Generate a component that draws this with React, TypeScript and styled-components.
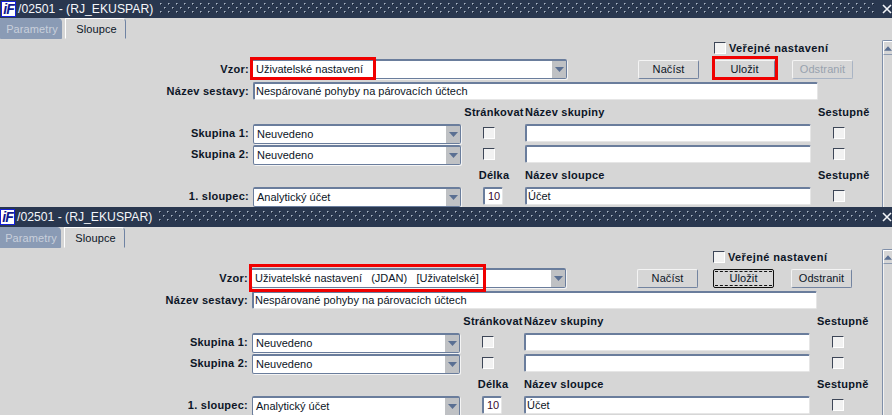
import React from "react";
import styled, { createGlobalStyle } from "styled-components";

const Global = createGlobalStyle`
  html, body { margin: 0; padding: 0; background: #d6d6d6; overflow: hidden; }
  body { font-family: "Liberation Sans", Arial, sans-serif; font-size: 11px; color: #0c1526; }
`;

const Page = styled.div`
  width: 892px;
  height: 415px;
  overflow: hidden;
`;

const Panel = styled.section<{ $height: number; $shift: number }>`
  display: flex;
  flex-direction: column;
  height: ${(p) => p.$height}px;
  width: ${(p) => 892 + p.$shift}px;
  margin-left: ${(p) => -p.$shift}px;
  overflow: hidden;
  background: #d6d6d6;
`;

const TitleBar = styled.header<{ $height: number }>`
  flex: none;
  display: flex;
  align-items: center;
  height: ${(p) => p.$height}px;
  background: #29374f;
  color: #f4f6fa;
  font-size: 12.2px;
`;

const Logo = styled.div`
  flex: none;
  width: 13px;
  height: 14px;
  margin-left: 1px;
  border: 1px solid #1420d8;
  background: #fff;
  color: #10188f;
  font: italic bold 14px/14px "Liberation Sans", sans-serif;
  text-align: center;
  letter-spacing: -1px;
`;

const TitleText = styled.div`
  flex: none;
  width: 142px;
  margin-left: 2px;
  white-space: nowrap;
`;

const Dots = styled.svg`
  flex: 1;
  height: 12px;
  min-width: 0;
`;

const Close = styled.svg`
  flex: none;
  width: 10px;
  height: 10px;
  margin: 0 0 0 6px;
`;

const TabStrip = styled.nav`
  flex: none;
  display: flex;
  height: 21px;
`;

const Tab = styled.div<{ $active?: boolean }>`
  box-sizing: border-box;
  width: ${(p) => (p.$active ? 61 : 62)}px;
  margin-left: ${(p) => (p.$active ? 3 : 0)}px;
  height: 21px;
  padding-left: 2px;
  line-height: 20px;
  text-align: center;
  font-size: 11px;
  letter-spacing: 0.1px;
  border-radius: 0 4px 0 0;
  color: ${(p) => (p.$active ? "#0c1526" : "#c9d0dc")};
  background: ${(p) => (p.$active ? "#d6d6d6" : "#8a9bb5")};
  border-top: 1px solid ${(p) => (p.$active ? "#ffffff" : "#8a9bb5")};
  border-left: 1px solid ${(p) => (p.$active ? "#ffffff" : "#8a9bb5")};
  border-right: 1px solid ${(p) => (p.$active ? "#6f83a3" : "#8a9bb5")};
  border-bottom: 1px solid ${(p) => (p.$active ? "#d6d6d6" : "#8a9bb5")};
`;

const Body = styled.div`
  flex: 1;
  min-height: 0;
  display: flex;
`;

const Form = styled.div`
  position: relative;
  flex: 1;
  min-width: 0;
  padding-top: 3px;
`;

const PublicRow = styled.div`
  display: flex;
  align-items: center;
  height: 11px;
  padding-left: 714px;
`;

const CheckText = styled.span`
  margin-left: 3px;
  font-weight: bold;
  font-size: 11px;
  letter-spacing: 0.38px;
  white-space: nowrap;
`;

const Check = styled.div`
  box-sizing: border-box;
  width: 12px;
  height: 12px;
  background: #f2f2f2;
  border-top: 1px solid #3d4657;
  border-left: 1px solid #3d4657;
  border-right: 1px solid #ffffff;
  border-bottom: 1px solid #ffffff;
`;

const TemplateRow = styled.div`
  display: flex;
  align-items: center;
  margin-top: 6px;
  height: 20px;
`;

const NameRow = styled.div`
  display: flex;
  align-items: center;
  margin-top: 3px;
  height: 18px;
`;

const Label = styled.div`
  flex: none;
  box-sizing: border-box;
  width: 249px;
  text-align: right;
  font-weight: bold;
  font-size: 11px;
  letter-spacing: 0.25px;
  white-space: nowrap;
`;

const Select = styled.div<{ $width: number; $gap?: number }>`
  flex: none;
  box-sizing: border-box;
  display: flex;
  width: ${(p) => p.$width}px;
  height: 20px;
  margin-left: ${(p) => p.$gap ?? 4}px;
  background: #fff;
  border: 1px solid #6a7d9c;
  border-top-width: 2px;
  border-radius: 2px;
  box-shadow: 1px 1px 0 #f4f4f4;
`;

const SelectText = styled.div`
  flex: 1;
  min-width: 0;
  padding-left: 3px;
  line-height: 17px;
  font-size: 11px;
  white-space: pre;
`;

const SelectArrow = styled.div`
  flex: none;
  display: flex;
  align-items: center;
  justify-content: center;
  width: 14px;
  background: #bfc1c4;
`;

const Arrow = styled.svg`
  width: 9px;
  height: 5px;
`;

const Buttons = styled.div`
  display: flex;
  margin-left: 71px;
`;

const Button = styled.div<{ $gap?: number; $disabled?: boolean; $focus?: boolean }>`
  box-sizing: border-box;
  width: 61px;
  height: 19px;
  margin-left: ${(p) => p.$gap ?? 0}px;
  line-height: 17px;
  text-align: center;
  font-size: 11px;
  letter-spacing: 0.1px;
  border-radius: 2px;
  color: ${(p) => (p.$disabled ? "#98a2ae" : "#0c1526")};
  border: 1px solid;
  border-color: ${(p) =>
    p.$focus
      ? "#101010"
      : p.$disabled
      ? "#f4f4f4 #a9b4c4 #a9b4c4 #f4f4f4"
      : "#f4f4f4 #7384a0 #7384a0 #f4f4f4"};
`;

const FocusRing = styled.div`
  box-sizing: border-box;
  margin: 1px;
  height: 15px;
  line-height: 13px;
  border: 1px dashed #101010;
  border-left: 0;
  border-right: 0;
`;

const TextBox = styled.div<{ $width: number; $height?: number; $gap?: number; $center?: boolean }>`
  flex: none;
  box-sizing: border-box;
  width: ${(p) => p.$width}px;
  height: ${(p) => p.$height ?? 18}px;
  margin-left: ${(p) => p.$gap ?? 0}px;
  padding-left: 1px;
  line-height: 15px;
  font-size: 11px;
  white-space: nowrap;
  text-align: ${(p) => (p.$center ? "center" : "left")};
  background: #fff;
  border-top: 2px solid #6a7d9c;
  border-left: 2px solid #6a7d9c;
  border-right: 1px solid #e6e6e6;
  border-bottom: 1px solid #e6e6e6;
  border-radius: 2px;
  color: ${(p) => (p.$center ? "#3a0a30" : "#0c1526")};
`;

const Grid = styled.div`
  display: grid;
  margin-top: 6px;
  grid-template-columns: 249px 212px 64px 286px 56px;
  grid-template-rows: 18px 21px 24px 18px 20px;
  align-items: start;
`;

const GridLabel = styled(Label)`
  line-height: 19px;
`;

const Head = styled.div<{ $center?: boolean; $inset?: number }>`
  line-height: 13px;
  font-weight: bold;
  font-size: 11px;
  letter-spacing: 0.25px;
  white-space: nowrap;
  text-align: ${(p) => (p.$center ? "center" : "left")};
  padding-left: ${(p) => p.$inset ?? 0}px;
`;

const CheckCell = styled.div<{ $inset: number }>`
  display: flex;
  padding: 3px 0 0 ${(p) => p.$inset}px;
`;

const CenterCell = styled.div`
  display: flex;
  justify-content: center;
`;

const Mark = styled.div<{ $x: number; $y: number; $w: number; $h: number }>`
  position: absolute;
  box-sizing: border-box;
  left: ${(p) => p.$x}px;
  top: ${(p) => p.$y}px;
  width: ${(p) => p.$w}px;
  height: ${(p) => p.$h}px;
  border: 3px solid #f00000;
  pointer-events: none;
`;

const Scrollbar = styled.aside`
  flex: none;
  box-sizing: border-box;
  width: 10px;
  margin-top: 1px;
  border-left: 1px solid #7f8fa9;
  border-top: 1px solid #7f8fa9;
  border-radius: 2px 0 0 0;
  background: #d6d6d6;
`;

const ScrollUp = styled.div`
  display: flex;
  align-items: center;
  justify-content: center;
  box-sizing: border-box;
  height: 14px;
  border-top: 1px solid #fff;
  border-left: 1px solid #fff;
  border-bottom: 1px solid #8c9ab0;
`;

const ScrollTrack = styled.div`
  height: 100%;
  border-left: 1px solid #f2f2f2;
`;

const DownArrow = () => (
  <Arrow viewBox="0 0 9 5">
    <path d="M0 0H9L4.5 5Z" fill="#5a6f92" />
  </Arrow>
);

const Sel = ({ text, width, gap }: { text: string; width: number; gap?: number }) => (
  <Select $width={width} $gap={gap}>
    <SelectText>{text}</SelectText>
    <SelectArrow>
      <DownArrow />
    </SelectArrow>
  </Select>
);

type WinProps = {
  id: string;
  height: number;
  barHeight: number;
  shift: number;
  template: string;
  disabled?: boolean;
  focus?: boolean;
  marks: { x: number; y: number; w: number; h: number }[];
};

const Window = ({ id, height, barHeight, shift, template, disabled, focus, marks }: WinProps) => (
  <Panel $height={height} $shift={shift}>
    <TitleBar $height={barHeight}>
      <Logo>iF</Logo>
      <TitleText>/02501 - (RJ_EKUSPAR)</TitleText>
      <Dots aria-hidden="true">
        <defs>
          <pattern id={id} width="8" height="8" patternUnits="userSpaceOnUse">
            <rect x="0" y="0" width="1" height="1" fill="#aeb8c6" />
            <rect x="1" y="0" width="1" height="1" fill="#6f7d92" />
            <rect x="0" y="1" width="1" height="1" fill="#6f7d92" />
            <rect x="1" y="1" width="1" height="1" fill="#141c2b" />
            <rect x="4" y="4" width="1" height="1" fill="#aeb8c6" />
            <rect x="5" y="4" width="1" height="1" fill="#6f7d92" />
            <rect x="4" y="5" width="1" height="1" fill="#6f7d92" />
            <rect x="5" y="5" width="1" height="1" fill="#141c2b" />
          </pattern>
        </defs>
        <rect width="100%" height="100%" fill={`url(#${id})`} />
      </Dots>
      <Close viewBox="0 0 10 10" aria-hidden="true">
        <path d="M1 1L9 9M9 1L1 9" stroke="#f2f4f8" strokeWidth="1.6" />
      </Close>
    </TitleBar>
    <TabStrip>
      <Tab>Parametry</Tab>
      <Tab $active>Sloupce</Tab>
    </TabStrip>
    <Body>
      <Form>
        <PublicRow>
          <Check />
          <CheckText>Veřejné nastavení</CheckText>
        </PublicRow>
        <TemplateRow>
          <Label>Vzor:</Label>
          <Sel text={template} width={315} gap={3} />
          <Buttons>
            <Button>Načíst</Button>
            <Button $gap={15} $focus={focus}>
              {focus ? <FocusRing>Uložit</FocusRing> : "Uložit"}
            </Button>
            <Button $gap={17} $disabled={disabled}>Odstranit</Button>
          </Buttons>
        </TemplateRow>
        <NameRow>
          <Label>Název sestavy:</Label>
          <TextBox $width={565} $gap={4}>Nespárované pohyby na párovacích účtech</TextBox>
        </NameRow>
        <Grid>
          <span />
          <span />
          <Head $center $inset={2}>Stránkovat</Head>
          <Head>Název skupiny</Head>
          <Head $inset={7}>Sestupně</Head>

          <GridLabel>Skupina 1:</GridLabel>
          <Sel text="Neuvedeno" width={208} />
          <CheckCell $inset={22}><Check /></CheckCell>
          <TextBox $width={286}> </TextBox>
          <CheckCell $inset={22}><Check /></CheckCell>

          <GridLabel>Skupina 2:</GridLabel>
          <Sel text="Neuvedeno" width={208} />
          <CheckCell $inset={22}><Check /></CheckCell>
          <TextBox $width={286}> </TextBox>
          <CheckCell $inset={22}><Check /></CheckCell>

          <span />
          <span />
          <Head $center $inset={2}>Délka</Head>
          <Head>Název sloupce</Head>
          <Head $inset={7}>Sestupně</Head>

          <GridLabel>1. sloupec:</GridLabel>
          <Sel text="Analytický účet" width={208} />
          <CenterCell><TextBox $width={20} $center>10</TextBox></CenterCell>
          <TextBox $width={286}>Účet</TextBox>
          <CheckCell $inset={22}><Check /></CheckCell>
        </Grid>
        {marks.map((m) => (
          <Mark key={m.x} $x={m.x} $y={m.y} $w={m.w} $h={m.h} />
        ))}
      </Form>
      <Scrollbar>
        <ScrollUp>
          <Arrow viewBox="0 0 9 5">
            <path d="M0 5H9L4.5 0Z" fill="#5a6f92" />
          </Arrow>
        </ScrollUp>
        <ScrollTrack />
      </Scrollbar>
    </Body>
  </Panel>
);

export default function App() {
  return (
    <Page>
      <Global />
      <Window
        id="dots-a"
        height={207}
        barHeight={18}
        shift={0}
        template="Uživatelské nastavení"
        disabled
        marks={[
          { x: 250, y: 18, w: 126, h: 23 },
          { x: 712, y: 17, w: 66, h: 24 },
        ]}
      />
      <Window
        id="dots-b"
        height={208}
        barHeight={20}
        shift={1}
        template="Uživatelské nastavení   (JDAN)   [Uživatelské]"
        focus
        marks={[{ x: 250, y: 16, w: 237, h: 28 }]}
      />
    </Page>
  );
}
